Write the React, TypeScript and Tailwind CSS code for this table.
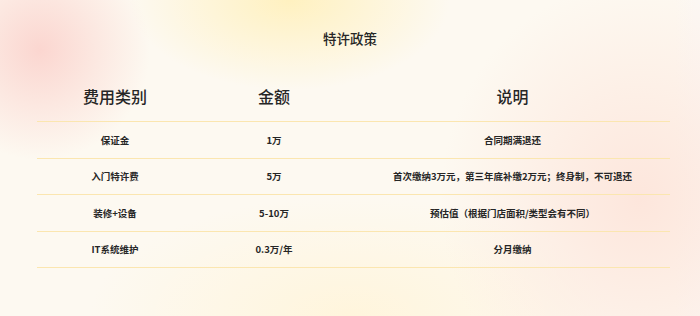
import React from 'react';

const rows = [
  { type: '保证金', amount: '1万', note: '合同期满退还' },
  { type: '入门特许费', amount: '5万', note: '首次缴纳3万元，第三年底补缴2万元；终身制，不可退还' },
  { type: '装修+设备', amount: '5-10万', note: '预估值（根据门店面积/类型会有不同）' },
  { type: 'IT系统维护', amount: '0.3万/年', note: '分月缴纳' },
];

export default function App() {
  return (
    <div
      className="w-[700px] h-[316px] overflow-hidden text-[#262626] bg-[#fdf9f1] bg-[radial-gradient(ellipse_110px_110px_at_40px_50px,#fbd6d0_0%,transparent_100%),radial-gradient(ellipse_160px_90px_at_290px_0px,#fff1c0_0%,transparent_100%),radial-gradient(ellipse_200px_220px_at_640px_200px,#fde6dc_0%,transparent_100%),radial-gradient(ellipse_260px_120px_at_350px_316px,#fff5dc_0%,transparent_100%),linear-gradient(to_right,transparent_675px,#fcf8f4_695px)]"
      style={{ fontFamily: '"Noto Sans CJK SC", "Noto Sans", sans-serif' }}
    >
      <div className="h-full flex flex-col">
        <h1 className="text-center text-[13.5px] font-medium mt-[27px] leading-[22px]">特许政策</h1>
        <div className="ml-[37px] w-[633px] mt-[21px]">
          <div className="grid grid-cols-[156px_162px_1fr] items-center h-[52px] border-b border-[#fbe6b0] text-[16px] font-medium">
            <div className="text-center">费用类别</div>
            <div className="text-center">金额</div>
            <div className="text-center">说明</div>
          </div>
          {rows.map((r) => (
            <div
              key={r.type}
              className="grid grid-cols-[156px_162px_1fr] items-center h-[36.5px] border-b border-[#fbe6b0] text-[9.5px] font-semibold"
            >
              <div className="text-center">{r.type}</div>
              <div className="text-center">{r.amount}</div>
              <div className="text-center">{r.note}</div>
            </div>
          ))}
        </div>
      </div>
    </div>
  );
}
